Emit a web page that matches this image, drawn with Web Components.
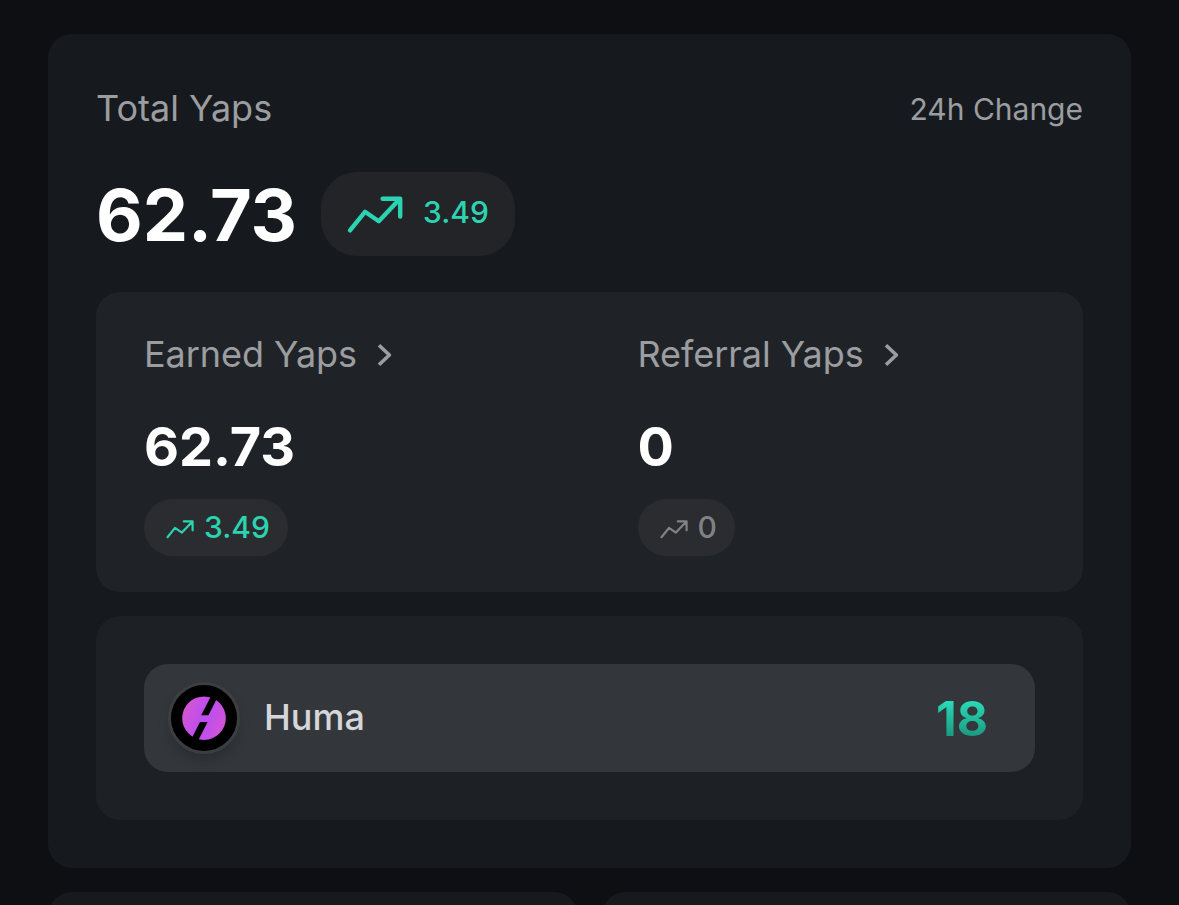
<!DOCTYPE html>
<html lang="en">
<head>
<meta charset="utf-8">
<title>Total Yaps</title>
<style>
  :root {
    --bg: #0e0f13;
    --card: #161a1e;
    --panel: #1f2327;
    --row: #33363a;
    --muted: #9c9da0;
    --teal: #2cd3b2;
  }
  html, body { height: 100%; }
  body {
    margin: 0;
    overflow: hidden;
    background: var(--bg);
    color: #fff;
    font-family: Inter, "Liberation Sans", sans-serif;
  }
</style>
</head>
<body>
<yaps-page>
  <yaps-card>
    <yaps-header change-label="24h Change">Total Yaps</yaps-header>
    <yaps-total value="62.73"><trend-pill size="large">3.49</trend-pill></yaps-total>
    <yaps-panel class="stats">
      <yaps-stat label="Earned Yaps" value="62.73"><trend-pill>3.49</trend-pill></yaps-stat>
      <yaps-stat label="Referral Yaps" value="0"><trend-pill muted>0</trend-pill></yaps-stat>
    </yaps-panel>
    <yaps-panel class="projects">
      <project-row rank="18"><huma-logo slot="logo"></huma-logo>Huma</project-row>
    </yaps-panel>
  </yaps-card>
  <yaps-card slot="next"></yaps-card>
  <yaps-card slot="next"></yaps-card>
</yaps-page>

<script>
class YapsPage extends HTMLElement {
  constructor() {
    super();
    this.attachShadow({ mode: 'open' });
    this.shadowRoot.innerHTML = `
      <style>
        :host {
          display: flex;
          flex-direction: column;
          box-sizing: border-box;
          height: 100vh;
          gap: 24px;
          padding: 34px 48px 0;
          overflow: hidden;
        }
        .next {
          display: grid;
          grid-template-columns: 1fr 1fr;
          gap: 24px;
          flex: 1;
          min-height: 0;
          overflow: hidden;
        }
      </style>
      <slot></slot>
      <div class="next"><slot name="next"></slot></div>
    `;
  }
}

class YapsCard extends HTMLElement {
  constructor() {
    super();
    this.attachShadow({ mode: 'open' });
    this.shadowRoot.innerHTML = `
      <style>
        :host {
          display: block;
          flex: none;
          padding: 48px;
          border-radius: 24px;
          background: var(--card);
        }
        ::slotted(.stats) {
          display: grid;
          grid-template-columns: 1fr 1fr;
          margin-top: 36px;
          padding: 36px 0;
        }
        ::slotted(.projects) {
          margin-top: 24px;
          padding: 48px;
          background: #1d2024;
        }
      </style>
      <slot></slot>
    `;
  }
}

class YapsHeader extends HTMLElement {
  constructor() {
    super();
    this.attachShadow({ mode: 'open' });
    this.shadowRoot.innerHTML = `
      <style>
        :host {
          display: flex;
          justify-content: space-between;
          align-items: center;
          height: 52px;
          color: var(--muted);
          font-size: 36px;
        }
        .change { font-size: 30px; margin-top: 1px; }
      </style>
      <span><slot></slot></span>
      <span class="change">${this.getAttribute('change-label')}</span>
    `;
  }
}

class YapsTotal extends HTMLElement {
  constructor() {
    super();
    this.attachShadow({ mode: 'open' });
    this.shadowRoot.innerHTML = `
      <style>
        :host {
          display: flex;
          align-items: center;
          gap: 24px;
          height: 84px;
          margin-top: 38px;
        }
        .value {
          padding-top: 2px;
          font-size: 72px;
          font-weight: 700;
          line-height: 84px;
          letter-spacing: -0.1px;
        }
      </style>
      <span class="value">${this.getAttribute('value')}</span>
      <slot></slot>
    `;
  }
}

class TrendPill extends HTMLElement {
  constructor() {
    super();
    this.attachShadow({ mode: 'open' });
    this.shadowRoot.innerHTML = `
      <style>
        :host {
          display: inline-flex;
          align-items: center;
          box-sizing: border-box;
          height: 57px;
          gap: 9px;
          padding: 0 18px 1px 21px;
          border-radius: 29px;
          background: #2a2c30;
          color: var(--teal);
          font-size: 30px;
          font-weight: 500;
        }
        :host([muted]) { color: #808285; }
        :host([size="large"]) {
          height: 84px;
          gap: 18px;
          padding: 0 26px 4px 24px;
          border-radius: 36px;
          background: #222428;
        }
        svg { display: block; width: 30px; height: 30px; margin-top: 3px; }
        :host([size="large"]) svg { width: 60px; height: 60px; margin-top: 3px; }
        path {
          fill: none;
          stroke: currentColor;
          stroke-width: 2.2;
          stroke-linecap: round;
          stroke-linejoin: round;
        }
      </style>
      <svg viewBox="0 0 30 30">
        <path d="M2.5 23.2 10 13.9 16.9 18.6 27 7.9M18.8 7.4H27.6V16.3"/>
      </svg>
      <span><slot></slot></span>
    `;
  }
}

class YapsPanel extends HTMLElement {
  constructor() {
    super();
    this.attachShadow({ mode: 'open' });
    this.shadowRoot.innerHTML = `
      <style>
        :host {
          display: block;
          border-radius: 24px;
          background: var(--panel);
        }
      </style>
      <slot></slot>
    `;
  }
}

class YapsStat extends HTMLElement {
  constructor() {
    super();
    this.attachShadow({ mode: 'open' });
    this.shadowRoot.innerHTML = `
      <style>
        :host {
          display: flex;
          flex-direction: column;
          align-items: flex-start;
          padding: 0 48px;
        }
        .label {
          display: flex;
          align-items: center;
          gap: 20px;
          height: 52px;
          color: var(--muted);
          font-size: 36px;
          letter-spacing: -0.05px;
        }
        .value {
          margin: 36px 0 22px;
          font-size: 54px;
          font-weight: 700;
          line-height: 61px;
        }
        svg { display: block; width: 16px; height: 24px; margin-top: 2px; }
      </style>
      <div class="label">
        <span>${this.getAttribute('label')}</span>
        <svg viewBox="0 0 16 24" fill="none" stroke="currentColor" stroke-width="3.6" stroke-linejoin="round">
          <path d="M2 2.2 12.4 12 2 21.8"/>
        </svg>
      </div>
      <div class="value">${this.getAttribute('value')}</div>
      <slot></slot>
    `;
  }
}

class ProjectRow extends HTMLElement {
  constructor() {
    super();
    this.attachShadow({ mode: 'open' });
    this.shadowRoot.innerHTML = `
      <style>
        :host {
          display: flex;
          align-items: center;
          box-sizing: border-box;
          height: 108px;
          gap: 24px;
          padding: 0 47px 0 24px;
          border-radius: 24px;
          background: var(--row);
        }
        .name {
          flex: 1;
          padding-bottom: 2px;
          color: #d5d6d9;
          font-size: 36px;
          font-weight: 500;
        }
        .rank {
          margin-top: 2px;
          font-size: 48px;
          font-weight: 700;
          line-height: 60px;
          color: transparent;
          background: linear-gradient(#2be0bd 15%, #178d76 90%);
          -webkit-background-clip: text;
          background-clip: text;
        }
      </style>
      <slot name="logo"></slot>
      <span class="name"><slot></slot></span>
      <span class="rank">${this.getAttribute('rank')}</span>
    `;
  }
}

class HumaLogo extends HTMLElement {
  constructor() {
    super();
    this.attachShadow({ mode: 'open' });
    this.shadowRoot.innerHTML = `
      <style>
        :host {
          display: block;
          box-sizing: border-box;
          width: 72px;
          height: 72px;
          border: 3px solid #3c3e42;
          border-radius: 50%;
          background: #000;
          box-shadow: 0 8px 14px -3px rgba(0, 0, 0, 0.2);
        }
        svg { display: block; width: 66px; height: 66px; }
      </style>
      <svg viewBox="0 0 66 66">
        <defs>
          <linearGradient id="fill" x1="0" y1="0.3" x2="1" y2="0.7">
            <stop offset="0" stop-color="#d656d0"/>
            <stop offset="0.5" stop-color="#bb4df2"/>
            <stop offset="1" stop-color="#d455d6"/>
          </linearGradient>
        </defs>
        <circle cx="33" cy="33.2" r="21.8" fill="url(#fill)"/>
        <!-- two slanted cuts leave the crossbar of the mark -->
        <path d="M40.6 10H47.8L37.4 30.2H30.2Z"/>
        <path d="M29 37H36.6L26.4 57H18.8Z"/>
      </svg>
    `;
  }
}

customElements.define('yaps-page', YapsPage);
customElements.define('yaps-card', YapsCard);
customElements.define('yaps-header', YapsHeader);
customElements.define('yaps-total', YapsTotal);
customElements.define('trend-pill', TrendPill);
customElements.define('yaps-panel', YapsPanel);
customElements.define('yaps-stat', YapsStat);
customElements.define('project-row', ProjectRow);
customElements.define('huma-logo', HumaLogo);
</script>
</body>
</html>
